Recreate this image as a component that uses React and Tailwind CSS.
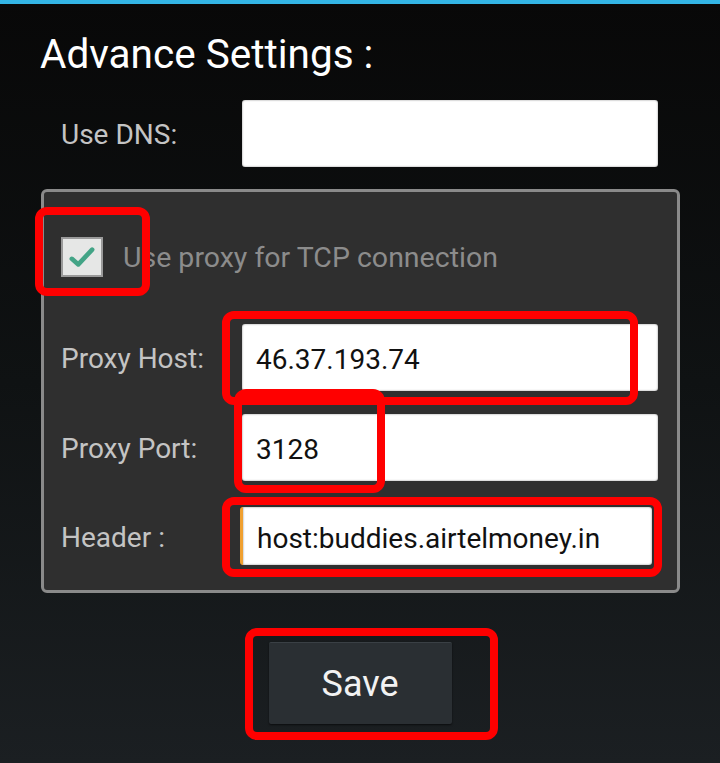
import React from "react";

const font = { fontFamily: "Roboto, 'Noto Sans', sans-serif" };

function Field({ value, focused }) {
  return (
    <div
      className={
        "flex-1 rounded-[3px] bg-white flex items-center pt-[5px] text-[28px] text-[#111] shadow-[inset_0_0_2px_rgba(0,0,0,0.5)]" +
        (focused
          ? " h-[58px] mr-[6px] -ml-[2px] pl-[14px] border-l-[3px] border-[#f0a030]"
          : " h-[67px] pl-[14px]")
      }
    >
      {value}
    </div>
  );
}

function Row({ label, value, focused, className }) {
  return (
    <div className={"flex items-center " + (className || "")}>
      <div className="w-[181px] pt-[3px] text-[28px] text-[#c4c4c4]">{label}</div>
      <Field value={value} focused={focused} />
    </div>
  );
}

function RedBox({ className }) {
  return (
    <div
      className={
        "absolute border-[8px] border-[#ff0000] rounded-[12px] pointer-events-none " +
        className
      }
    />
  );
}

export default function App() {
  return (
    <div
      style={font}
      className="relative w-[720px] h-[763px] overflow-hidden bg-gradient-to-b from-[#080808] via-[#0f1213] to-[#1b1f22] flex flex-col"
    >
      <div className="h-[4px] bg-[#33b5e5]" />
      <div className="pl-[40px] mt-[27px] text-[40.5px] leading-[46px] text-white">
        Advance Settings :
      </div>
      <div className="flex items-center pl-[61px] pr-[62px] mt-[23px]">
        <div className="w-[181px] pt-[2px] text-[28px] text-[#c4c4c4]">Use DNS:</div>
        <Field value="" />
      </div>
      <div className="ml-[41px] w-[639px] h-[404px] mt-[22px] rounded-[6px] border-[3px] border-[#8a8a8a] bg-[#2f2f2f] pl-[17px] pr-[19px] flex flex-col">
        <div className="flex items-center mt-[45px] h-[40px]">
          <div className="w-[42px] h-[40px] bg-[#e6e7e6] border-[2px] border-[#9a9a9a] flex items-center justify-center">
            <svg width="28" height="24" viewBox="0 0 30 26">
              <path
                d="M4 15 L11 21 L26 5"
                fill="none"
                stroke="#43a486"
                strokeWidth="5"
                strokeLinecap="round"
                strokeLinejoin="round"
              />
            </svg>
          </div>
          <div className="ml-[20px] pt-[2px] text-[28.5px] text-[#8c8c8c]">
            Use proxy for TCP connection
          </div>
        </div>
        <Row className="mt-[47px]" label="Proxy Host:" value="46.37.193.74" />
        <Row className="mt-[23px]" label="Proxy Port:" value="3128" />
        <Row className="mt-[26px]" label="Header :" value="host:buddies.airtelmoney.in" focused />
      </div>
      <div className="flex justify-center mt-[49px]">
        <div className="w-[183px] h-[82px] rounded-[2px] bg-[#2a2f33] border-t border-[#3a4045] shadow-[0_1px_2px_rgba(0,0,0,0.6)] flex items-center justify-center text-[36px] text-[#f2f2f2]">
          Save
        </div>
      </div>

      <RedBox className="left-[35px] top-[207px] w-[115px] h-[89px]" />
      <RedBox className="left-[222px] top-[311px] w-[416px] h-[94px]" />
      <RedBox className="left-[234px] top-[389px] w-[151px] h-[104px]" />
      <RedBox className="left-[222px] top-[497px] w-[440px] h-[80px]" />
      <RedBox className="left-[245px] top-[628px] w-[253px] h-[112px]" />
    </div>
  );
}
